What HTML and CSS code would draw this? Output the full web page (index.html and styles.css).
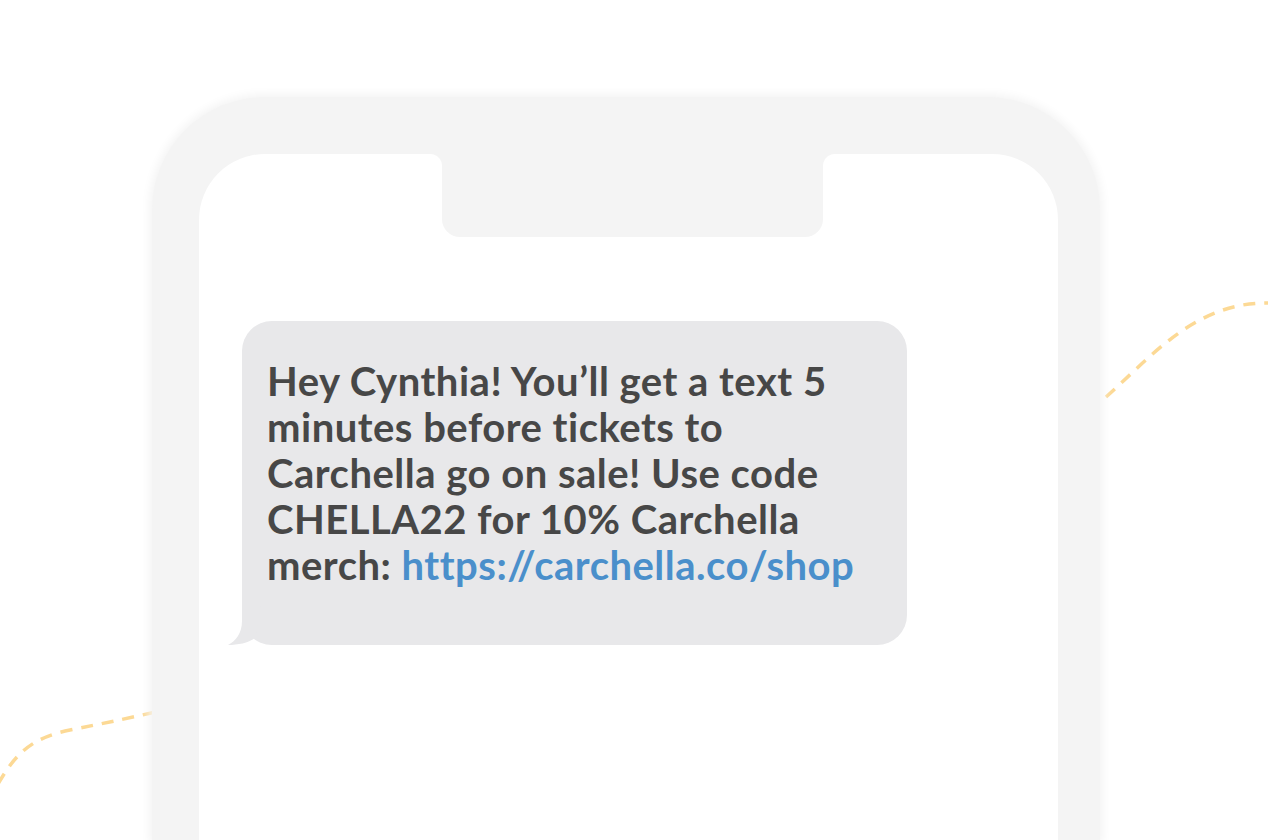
FILE: index.html
```html
<!DOCTYPE html>
<html lang="en">
<head>
  <meta charset="UTF-8">
  <meta name="viewport" content="width=device-width, initial-scale=1.0">
  <title>Text Message</title>
  <link rel="stylesheet" href="styles.css">
</head>
<body>
  <svg class="squiggles" width="1268" height="840" viewBox="0 0 1268 840">
    <path d="M1106 397 C1150 358 1195 302 1268 303" />
    <path d="M-2 784 C15 755 30 738 70 730 C100 724 125 719 160 711" />
  </svg>

  <div class="phone">
    <div class="screen">
      <div class="notch"></div>
      <div class="bubble">
        <p class="message">Hey Cynthia! You’ll get a text 5<br>minutes before tickets to<br>Carchella go on sale! Use code<br>CHELLA22 for 10% Carchella<br>merch: <a href="#">https://carchella.co/shop</a></p>
        <svg class="tail" width="40" height="44" viewBox="0 0 40 44">
          <path d="M14 0 L14 20 C14 32 8 40 0 44 C10 44 20 42 27 37 L34 0 Z" />
        </svg>
      </div>
    </div>
  </div>
</body>
</html>
```

FILE: styles.css
```css
body {
  margin: 0;
  background-color: #fff;
  font-family: Lato, "Open Sans", sans-serif;
  overflow: hidden;
  height: 840px;
  position: relative;
}

.squiggles {
  position: absolute;
  left: 0;
  top: 0;
  fill: none;
  stroke: #fcd995;
  stroke-width: 3.5;
  stroke-dasharray: 12 9;
}

.phone {
  position: relative;
  width: 948px;
  height: 743px;
  margin: 97px 0 0 152px;
  padding: 57px 42px 0 47px;
  box-sizing: border-box;
  background-color: #f4f4f4;
  border-radius: 113px 113px 0 0;
  box-shadow: 0 0 10px 3px #f4f4f4;
}

.screen {
  position: relative;
  height: 100%;
  padding: 167px 0 0 43px;
  box-sizing: border-box;
  background-color: #fff;
  border-radius: 66px 66px 0 0;
}

.notch {
  position: absolute;
  top: 0;
  left: 243px;
  width: 381px;
  height: 83px;
  background-color: #f4f4f4;
  border-radius: 0 0 18px 18px;
}

.notch::before,
.notch::after {
  content: "";
  position: absolute;
  top: 0;
  width: 12px;
  height: 12px;
}

.notch::before {
  left: -12px;
  background: radial-gradient(circle at 0 100%, transparent 11.5px, #f4f4f4 12.5px);
}

.notch::after {
  right: -12px;
  background: radial-gradient(circle at 100% 100%, transparent 11.5px, #f4f4f4 12.5px);
}

.bubble {
  position: relative;
  width: 665px;
  padding: 37px 20px 57px 25px;
  box-sizing: border-box;
  background-color: #e8e8ea;
  border-radius: 30px;
}

.message {
  margin: 0;
  font-size: 40px;
  font-weight: 700;
  line-height: 46px;
  letter-spacing: 0.5px;
  color: #474747;
  white-space: nowrap;
  font-variant-ligatures: none;
}

.message a {
  color: #4a8fcb;
  text-decoration: none;
}

.tail {
  position: absolute;
  left: -14px;
  bottom: 0;
  fill: #e8e8ea;
}
```
